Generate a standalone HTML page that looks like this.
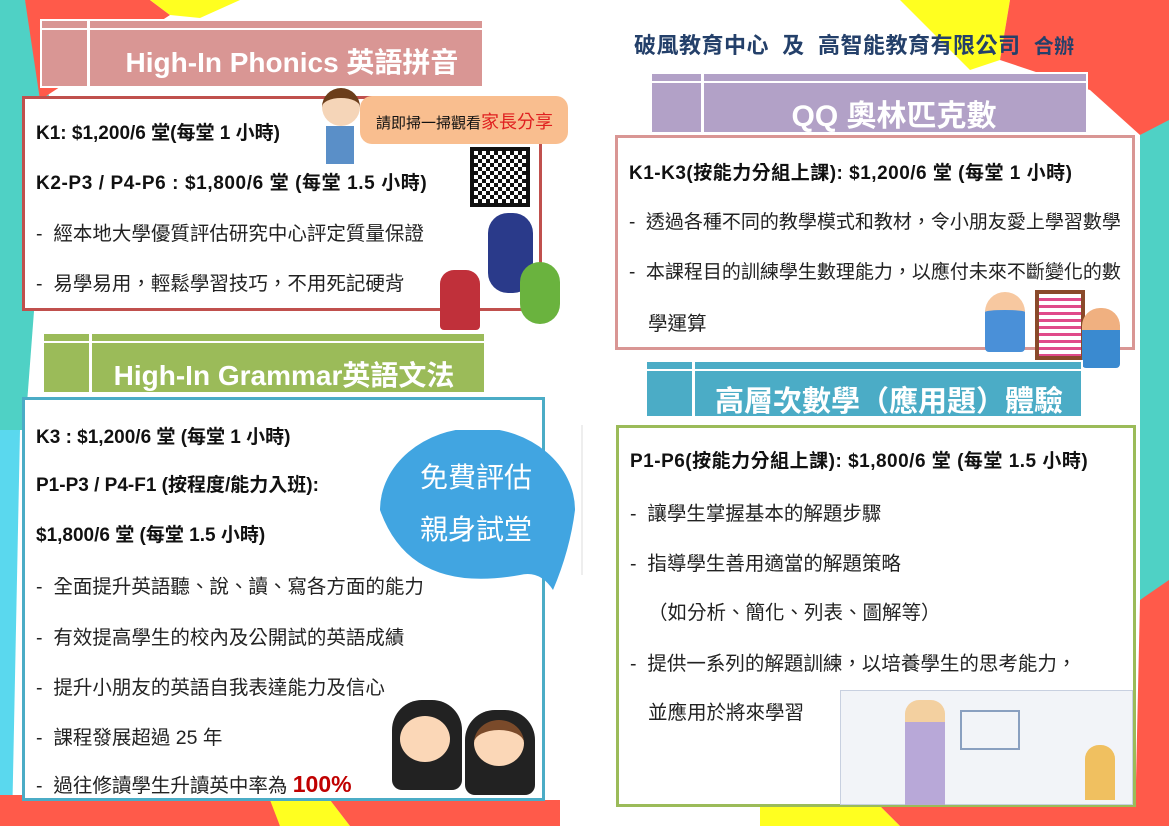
<!DOCTYPE html>
<html><head><meta charset="utf-8"><style>
*{margin:0;padding:0;box-sizing:border-box}
body{width:1169px;height:826px;position:relative;overflow:hidden;background:#fff;font-family:"Liberation Sans","Noto Sans CJK TC",sans-serif;color:#111}
.a{position:absolute}
.hdr{position:absolute;border:2px solid #fff;}
.hdr .c{position:absolute;left:0;top:0;bottom:0;border-right:3px solid #fff}
.hdr .s{position:absolute;left:0;right:0;top:7px;border-top:2px solid #fff}
.hdr .t{position:absolute;left:0;right:0;color:#fff;font-weight:bold;text-align:center;white-space:nowrap}
.box{position:absolute;background:#fff;border:3px solid}
.b{font-weight:bold;font-size:19px;position:absolute;white-space:nowrap}
.l{font-size:19.5px;position:absolute;white-space:nowrap;color:#222}
</style></head><body>
<svg class="a" style="left:0;top:0" width="1169" height="826">
<polygon points="0,0 25,0 50,100 25,430 0,430" fill="#4fd1c5"/>
<polygon points="0,430 20,430 12,826 0,826" fill="#5ad8ee"/>
<polygon points="25,0 150,0 170,15 40,100" fill="#ff5a4a"/>
<polygon points="150,0 240,0 200,18 170,15" fill="#ffff20"/>
<polygon points="900,0 1010,0 1000,60 970,70" fill="#ffff20"/>
<polygon points="1010,0 1169,0 1169,130 1140,135 1090,90 1000,60" fill="#ff5a4a"/>
<polygon points="1140,135 1169,120 1169,590 1140,600" fill="#4fd1c5"/>
<polygon points="1140,600 1169,580 1169,826 1135,826" fill="#ff5a4a"/>
<polygon points="0,795 270,795 280,826 0,826" fill="#ff5a4a"/>
<polygon points="270,800 330,800 350,826 280,826" fill="#ffff20"/>
<polygon points="330,800 560,800 560,826 350,826" fill="#ff5a4a"/>
<polygon points="760,806 880,806 900,826 760,826" fill="#ffff20"/>
<polygon points="880,806 1169,806 1169,826 900,826" fill="#ff5a4a"/>
<line x1="582" y1="425" x2="582" y2="575" stroke="#ddd" stroke-width="1"/>
</svg>

<div class="hdr" style="left:40px;top:19px;width:444px;height:69px;background:#d99694"><div class="c" style="width:48px"></div><div class="s"></div><div class="t" style="top:20px;font-size:28px;padding-left:60px">High-In Phonics 英語拼音</div></div>
<div class="box" style="left:22px;top:96px;width:520px;height:215px;border-color:#c0504d"></div>
<div class="b" style="left:36px;top:118px">K1: $1,200/6 堂(每堂 1 小時)</div>
<div class="b" style="left:36px;top:168px;letter-spacing:0.6px">K2-P3 / P4-P6 : $1,800/6 堂 (每堂 1.5 小時)</div>
<div class="l" style="left:36px;top:217px">-&nbsp; 經本地大學優質評估研究中心評定質量保證</div>
<div class="l" style="left:36px;top:267px">-&nbsp; 易學易用，輕鬆學習技巧，不用死記硬背</div>
<div class="a" style="left:360px;top:96px;width:208px;height:48px;background:#f9be8f;border-radius:12px;font-size:15px;padding:12px 0 0 16px;white-space:nowrap">請即掃一掃觀看<span style="color:#e02020;font-size:18px">家長分享</span></div>
<div class="a" style="left:322px;top:88px;width:38px;height:38px;border-radius:50%;background:#f5d5b8;border-top:10px solid #6b3d1a"></div>
<div class="a" style="left:326px;top:126px;width:28px;height:38px;background:#5a8fc8"></div>
<div class="a" style="left:470px;top:147px;width:60px;height:60px;background:repeating-conic-gradient(#111 0 25%,#fff 0 50%) 0 0/8px 8px;border:4px solid #111"></div>
<div class="a" style="left:488px;top:213px;width:45px;height:80px;background:#2a3a8a;border-radius:20px"></div>
<div class="a" style="left:440px;top:270px;width:40px;height:60px;background:#c0303a;border-radius:14px 14px 4px 4px"></div>
<div class="a" style="left:520px;top:262px;width:40px;height:62px;background:#6ab33e;border-radius:20px"></div>

<div class="hdr" style="left:42px;top:332px;width:444px;height:62px;background:#9bbb59"><div class="c" style="width:48px"></div><div class="s"></div><div class="t" style="top:20px;font-size:28px;padding-left:40px">High-In Grammar英語文法</div></div>
<div class="box" style="left:22px;top:397px;width:523px;height:404px;border-color:#4bacc6"></div>
<div class="b" style="left:36px;top:422px">K3 : $1,200/6 堂 (每堂 1 小時)</div>
<div class="b" style="left:36px;top:470px">P1-P3 / P4-F1 (按程度/能力入班):</div>
<div class="b" style="left:36px;top:520px">$1,800/6 堂 (每堂 1.5 小時)</div>
<div class="l" style="left:36px;top:570px">-&nbsp; 全面提升英語聽、說、讀、寫各方面的能力</div>
<div class="l" style="left:36px;top:621px">-&nbsp; 有效提高學生的校內及公開試的英語成績</div>
<div class="l" style="left:36px;top:671px">-&nbsp; 提升小朋友的英語自我表達能力及信心</div>
<div class="l" style="left:36px;top:721px">-&nbsp; 課程發展超過 25 年</div>
<div class="l" style="left:36px;top:769px">-&nbsp; 過往修讀學生升讀英中率為 <b style="color:#c00000;font-size:23px">100%</b></div>
<svg class="a" style="left:370px;top:430px" width="215" height="160"><path d="M10,80 A95,80 0 1,1 205,80 Q200,120 183,160 Q170,140 150,145 Q40,165 10,80Z" fill="#41a5e1"/></svg>
<div class="a" style="left:420px;top:452px;color:#fff;font-size:28px;line-height:52px;text-align:center">免費評估<br>親身試堂</div>
<div class="a" style="left:392px;top:700px;width:70px;height:90px;background:#222;border-radius:30px 30px 10px 10px"></div>
<div class="a" style="left:465px;top:710px;width:70px;height:85px;background:#222;border-radius:30px 30px 10px 10px"></div>
<div class="a" style="left:400px;top:716px;width:50px;height:46px;background:#fbd7b7;border-radius:50%"></div>
<div class="a" style="left:474px;top:720px;width:50px;height:46px;background:#fbd7b7;border-radius:50%;border-top:10px solid #7a4a2a"></div>

<div class="a" style="left:634px;top:28px;font-size:22px;font-weight:bold;color:#24406a;white-space:nowrap;letter-spacing:0.5px">破風教育中心 &nbsp;及 &nbsp;高智能教育有限公司 &nbsp;<span style="font-size:20px">合辦</span></div>
<div class="hdr" style="left:650px;top:72px;width:438px;height:62px;background:#b2a1c7"><div class="c" style="width:52px"></div><div class="s"></div><div class="t" style="top:17px;font-size:30px;padding-left:50px">QQ 奧林匹克數</div></div>
<div class="box" style="left:615px;top:135px;width:520px;height:215px;border-color:#d99694"></div>
<div class="b" style="left:629px;top:158px;letter-spacing:0.5px">K1-K3(按能力分組上課): $1,200/6 堂 (每堂 1 小時)</div>
<div class="l" style="left:629px;top:207px;font-size:19px">-&nbsp; 透過各種不同的教學模式和教材，令小朋友愛上學習數學</div>
<div class="l" style="left:629px;top:257px;font-size:19px">-&nbsp; 本課程目的訓練學生數理能力，以應付未來不斷變化的數</div>
<div class="l" style="left:648px;top:307px">學運算</div>
<div class="a" style="left:985px;top:292px;width:40px;height:60px;background:#4a90d8;border-radius:20px 20px 4px 4px;border-top:18px solid #f7c8a0"></div>
<div class="a" style="left:1035px;top:290px;width:50px;height:70px;border:4px solid #8a4a2a;background:repeating-linear-gradient(#fff 0 4px,#e04a8a 4px 7px)"></div>
<div class="a" style="left:1082px;top:308px;width:38px;height:60px;background:#3a8ad0;border-radius:18px 18px 4px 4px;border-top:22px solid #f0b080"></div>

<div class="hdr" style="left:645px;top:360px;width:438px;height:58px;background:#4bacc6"><div class="c" style="width:48px"></div><div class="s"></div><div class="t" style="top:16px;font-size:29px;padding-left:50px">高層次數學（應用題）體驗</div></div>
<div class="box" style="left:616px;top:425px;width:520px;height:382px;border-color:#9bbb59"></div>
<div class="b" style="left:630px;top:446px;letter-spacing:0.5px">P1-P6(按能力分組上課): $1,800/6 堂 (每堂 1.5 小時)</div>
<div class="l" style="left:630px;top:497px">-&nbsp; 讓學生掌握基本的解題步驟</div>
<div class="l" style="left:630px;top:547px">-&nbsp; 指導學生善用適當的解題策略</div>
<div class="l" style="left:648px;top:596px">（如分析、簡化、列表、圖解等）</div>
<div class="l" style="left:630px;top:647px">-&nbsp; 提供一系列的解題訓練，以培養學生的思考能力，</div>
<div class="l" style="left:648px;top:696px">並應用於將來學習</div>
<div class="a" style="left:840px;top:690px;width:293px;height:115px;background:#f2f4f8;border:1px solid #c8d0e0"></div>
<div class="a" style="left:905px;top:700px;width:40px;height:105px;background:#b8a8d8;border-radius:14px 14px 0 0;border-top:22px solid #f3d0a0"></div>
<div class="a" style="left:960px;top:710px;width:60px;height:40px;border:2px solid #8aa0c0"></div>
<div class="a" style="left:1085px;top:745px;width:30px;height:55px;background:#f0c060;border-radius:14px 14px 0 0"></div>
</body></html>
